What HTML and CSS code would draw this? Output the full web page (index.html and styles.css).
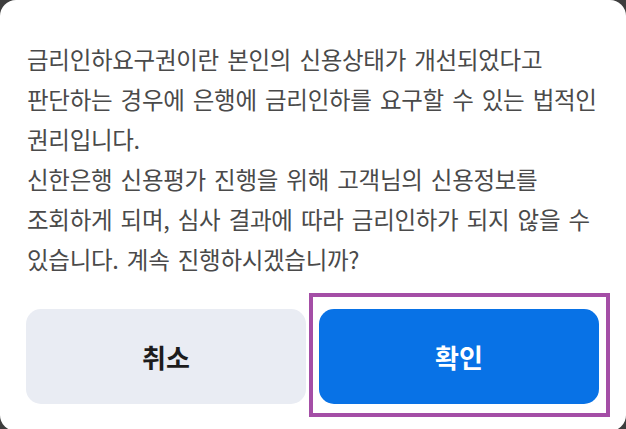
FILE: index.html
```html
<!DOCTYPE html>
<html lang="ko">
<head>
<meta charset="utf-8">
<link rel="stylesheet" href="styles.css">
</head>
<body>
<div class="dialog">
  <p class="message">금리인하요구권이란 본인의 신용상태가 개선되었다고<br>판단하는 경우에 은행에 금리인하를 요구할 수 있는 법적인<br>권리입니다.<br>신한은행 신용평가 진행을 위해 고객님의 신용정보를<br>조회하게 되며, 심사 결과에 따라 금리인하가 되지 않을 수<br>있습니다. 계속 진행하시겠습니까?</p>
  <div class="actions">
    <button class="btn btn-cancel">취소</button>
    <div class="confirm-wrap">
      <button class="btn btn-confirm">확인</button>
      <span class="highlight"></span>
    </div>
  </div>
</div>
</body>
</html>
```
FILE: styles.css
```css
html, body {
  margin: 0;
  padding: 0;
  overflow: hidden;
}
body {
  background: #3d3d3d;
  width: 626px;
  height: 429px;
  font-family: "Noto Sans CJK KR", "Noto Sans", sans-serif;
}
.dialog {
  background: #ffffff;
  width: 626px;
  height: 431px;
  border-radius: 16px;
  box-sizing: border-box;
  padding: 39px 26px 0 27px;
}
.message {
  margin: 0;
  font-size: 23.5px;
  line-height: 40px;
  letter-spacing: -0.3px;
  word-spacing: 2px;
  color: #4a4a4a;
  white-space: nowrap;
}
.actions {
  display: grid;
  grid-template-columns: 280px 280px;
  column-gap: 13px;
  margin-top: 30px;
  margin-left: -1px;
}
.btn {
  height: 95px;
  border: 0;
  border-radius: 15px;
  font-family: "Noto Sans CJK KR", "Noto Sans", sans-serif;
  font-size: 26px;
  font-weight: 700;
  padding: 0;
  width: 100%;
}
.btn-cancel {
  background: #e9ecf3;
  color: #1c1c1c;
}
.confirm-wrap {
  position: relative;
}
.btn-confirm {
  background: #0872e6;
  color: #ffffff;
}
.highlight {
  position: absolute;
  left: -10px;
  right: -11px;
  top: -16px;
  bottom: -13px;
  border: 4px solid #a44ea6;
  pointer-events: none;
}
```
